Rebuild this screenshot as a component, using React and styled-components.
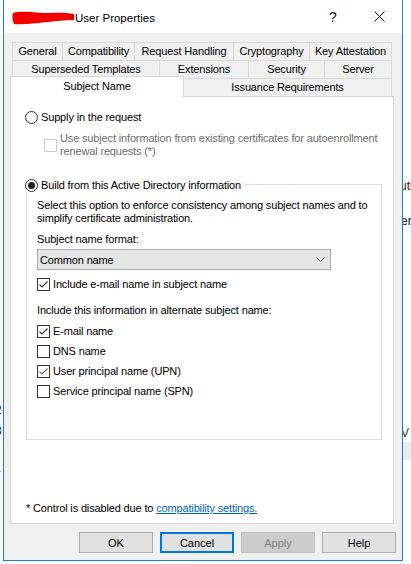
import React from 'react';
import styled, { createGlobalStyle } from 'styled-components';

const GlobalStyle = createGlobalStyle`
  html, body { margin: 0; padding: 0; background: #fff; }
  body { font-family: "Liberation Sans", Arial, sans-serif; overflow: hidden; }
  *, *::before, *::after { box-sizing: border-box; }
`;

const Desktop = styled.div`
  position: relative;
  width: 411px;
  height: 564px;
  overflow: hidden;
  background: #fff;
  padding-left: 3px;
`;

const Scrap = styled.span`
  position: absolute;
  left: ${p => p.$x}px;
  top: ${p => p.$y}px;
  font-family: "Liberation Sans", Arial, sans-serif;
  font-size: 12px;
  line-height: 14px;
  white-space: nowrap;
  color: ${p => p.$c || '#111'};
`;

const Band = styled.div`
  position: absolute;
  left: 400px;
  top: 442px;
  width: 11px;
  height: 18px;
  background: #ececec;
`;

const Window = styled.div`
  position: relative;
  z-index: 1;
  width: 400px;
  height: 561px;
  border: 1px solid #1a7fd6;
  border-top: none;
  display: flex;
  flex-direction: column;
  font-family: "Liberation Sans", Arial, sans-serif;
  font-size: 11px;
  letter-spacing: -0.15px;
  color: #000;
`;

const TitleBar = styled.div`
  flex: none;
  height: 33px;
  background: #fff;
  display: flex;
  align-items: center;
  padding-left: 8px;
`;

const Redaction = styled.svg`
  flex: none;
  width: 63px;
  height: 16px;
  margin-top: 2px;
`;

const TitleText = styled.span`
  flex: 1;
  margin-top: 2px;
  font-size: 11.5px;
  letter-spacing: 0;
  white-space: nowrap;
`;

const CaptionButton = styled.div`
  flex: none;
  width: 46px;
  height: 33px;
  display: flex;
  align-items: center;
  justify-content: center;
  font-size: 14px;
  letter-spacing: 0;
  color: #111;
`;

const Body = styled.div`
  flex: 1;
  background: #f0f0f0;
  display: flex;
  flex-direction: column;
  padding: 9px 8px 0 6px;
`;

const TabStrip = styled.div`
  position: relative;
  z-index: 2;
  display: flex;
  flex-direction: column;
  padding: 0 2px;
`;

const TabRow = styled.div`
  display: flex;
  height: 18px;
  ${p => p.$front && `
    height: 20px;
    margin-top: -2px;
    align-items: flex-end;
  `}
`;

const Tab = styled.div`
  flex: none;
  width: ${p => p.$w}px;
  height: 18px;
  margin-left: ${p => p.$ml || 0}px;
  border-top: 1px solid #d9d9d9;
  border-left: 1px solid #d9d9d9;
  background: #f0f0f0;
  text-align: center;
  line-height: 17px;
  white-space: nowrap;
  &:last-child { border-right: 1px solid #d9d9d9; }
`;

const ActiveTab = styled(Tab)`
  position: relative;
  z-index: 1;
  height: 21px;
  margin-bottom: -1px;
  background: #fff;
  border-right: 1px solid #d9d9d9;
  line-height: 18px;
`;

const Panel = styled.div`
  flex: none;
  height: 428px;
  background: #fff;
  border: 1px solid #d9d9d9;
  display: flex;
  flex-direction: column;
  padding: 13px 0 8px 14px;
`;

const OptionRow = styled.div`
  display: flex;
  align-items: center;
  gap: 3px;
  min-height: 14px;
  margin-top: ${p => p.$mt || 0}px;
  margin-left: ${p => p.$ml || 0}px;
  color: ${p => (p.$disabled ? '#6d6d6d' : '#000')};
  line-height: 13px;
  white-space: nowrap;
`;

const RadioCircle = styled.span`
  flex: none;
  width: 13px;
  height: 13px;
  border-radius: 50%;
  border: 1px solid #333;
  background: #fff;
  display: flex;
  align-items: center;
  justify-content: center;
  &::after {
    content: '';
    width: 7px;
    height: 7px;
    border-radius: 50%;
    background: #222;
    display: ${p => (p.$checked ? 'block' : 'none')};
  }
`;

const Box = styled.span`
  flex: none;
  width: 13px;
  height: 13px;
  border: 1px solid ${p => (p.$disabled ? '#cccccc' : '#333')};
  background: #fff;
  display: flex;
  align-items: center;
  justify-content: center;
`;

const GroupBox = styled.div`
  position: relative;
  flex: none;
  margin: 26px 0 0 1px;
  width: 356px;
  height: 256px;
  border: 1px solid #dcdcdc;
  display: flex;
  flex-direction: column;
  padding: 14px 0 0 10px;
`;

const GroupLegend = styled.div`
  position: absolute;
  left: -2px;
  top: -7px;
  background: #fff;
  padding-right: 3px;
`;

const Text = styled.div`
  line-height: 13px;
  white-space: nowrap;
  margin-top: ${p => p.$mt || 0}px;
`;

const Select = styled.div`
  flex: none;
  width: 294px;
  height: 21px;
  margin-top: 3px;
  background: #e5e5e5;
  border: 1px solid #acacac;
  display: flex;
  align-items: center;
  justify-content: space-between;
  padding: 0 5px 0 2px;
`;

const Footnote = styled.div`
  margin-top: auto;
  margin-left: 1px;
  line-height: 13px;
  white-space: nowrap;
`;

const Link = styled.span`
  color: #0066cc;
  text-decoration: underline;
`;

const ButtonRow = styled.div`
  display: flex;
  justify-content: flex-end;
  gap: 7px;
  margin-top: 8px;
  margin-right: -2px;
`;

const Button = styled.button`
  flex: none;
  width: 74px;
  height: 21px;
  padding: 0;
  margin: 0;
  font: inherit;
  letter-spacing: 0;
  display: flex;
  align-items: center;
  justify-content: center;
  background: ${p => (p.$disabled ? '#cccccc' : '#e1e1e1')};
  border: 1px solid ${p => (p.$focused ? '#0078d7' : p.$disabled ? '#bfbfbf' : '#adadad')};
  box-shadow: ${p => (p.$focused ? 'inset 0 0 0 1px #0078d7' : 'none')};
  color: ${p => (p.$disabled ? '#838383' : '#000')};
`;

const Check = ({ color = '#333' }) => (
  <svg width="11" height="11" viewBox="0 0 11 11">
    <path d="M1.5 5.5 L4 8 L9.5 2.5" fill="none" stroke={color} strokeWidth="1.1" />
  </svg>
);

const CheckOption = ({ checked, checkColor, children, mt }) => (
  <OptionRow $mt={mt}>
    <Box>{checked && <Check color={checkColor} />}</Box>
    <span>{children}</span>
  </OptionRow>
);

export default function App() {
  return (
    <>
      <GlobalStyle />
      <Desktop>
        <Scrap $x={400} $y={179} $c="#4a1020">utl</Scrap>
        <Scrap $x={401} $y={214}>er</Scrap>
        <Scrap $x={401} $y={426} $c="#333">V A</Scrap>
        <Band />
        <Scrap $x={-5} $y={403}>2</Scrap>
        <Scrap $x={-5} $y={424}>3</Scrap>
        <Scrap $x={-5} $y={461} $c="#c8a800">1</Scrap>
        <Window>
          <TitleBar>
            <Redaction viewBox="0 0 63 16">
              <path
                d="M1 3 C 8 1, 18 2, 30 3 C 42 3, 52 2, 62 4 L 62 10 C 52 10, 44 11, 36 12 C 24 13, 12 15, 2 14 C 0 10, 0 6, 1 3 Z"
                fill="#f20000"
              />
            </Redaction>
            <TitleText>User Properties</TitleText>
            <CaptionButton>?</CaptionButton>
            <CaptionButton>
              <svg width="11" height="11" viewBox="0 0 11 11">
                <path d="M0.5 0.5 L10.5 10.5 M10.5 0.5 L0.5 10.5" stroke="#111" strokeWidth="1" />
              </svg>
            </CaptionButton>
          </TitleBar>
          <Body>
            <TabStrip>
              <TabRow>
                <Tab $w={50}>General</Tab>
                <Tab $w={72}>Compatibility</Tab>
                <Tab $w={99}>Request Handling</Tab>
                <Tab $w={76}>Cryptography</Tab>
                <Tab $w={83}>Key Attestation</Tab>
              </TabRow>
              <TabRow>
                <Tab $w={147}>Superseded Templates</Tab>
                <Tab $w={89}>Extensions</Tab>
                <Tab $w={76}>Security</Tab>
                <Tab $w={68}>Server</Tab>
              </TabRow>
              <TabRow $front>
                <ActiveTab $w={174} $ml={-2}>Subject Name</ActiveTab>
                <Tab $w={209} $ml={-1}>Issuance Requirements</Tab>
              </TabRow>
            </TabStrip>
            <Panel>
              <OptionRow>
                <RadioCircle />
                <span>Supply in the request</span>
              </OptionRow>
              <OptionRow $mt={8} $ml={19} $disabled>
                <Box $disabled />
                <span>
                  Use subject information from existing certificates for autoenrollment
                  <br />
                  renewal requests (*)
                </span>
              </OptionRow>
              <GroupBox>
                <GroupLegend>
                  <OptionRow>
                    <RadioCircle $checked />
                    <span>Build from this Active Directory information</span>
                  </OptionRow>
                </GroupLegend>
                <Text>
                  Select this option to enforce consistency among subject names and to
                  <br />
                  simplify certificate administration.
                </Text>
                <Text $mt={8}>Subject name format:</Text>
                <Select>
                  <span>Common name</span>
                  <svg width="9" height="5" viewBox="0 0 9 5">
                    <path d="M0.5 0.5 L4.5 4.5 L8.5 0.5" fill="none" stroke="#555" strokeWidth="1" />
                  </svg>
                </Select>
                <CheckOption checked mt={7}>Include e-mail name in subject name</CheckOption>
                <Text $mt={13}>Include this information in alternate subject name:</Text>
                <CheckOption checked mt={7}>E-mail name</CheckOption>
                <CheckOption mt={6}>DNS name</CheckOption>
                <CheckOption checked checkColor="#6a6a6a" mt={6}>User principal name (UPN)</CheckOption>
                <CheckOption mt={6}>Service principal name (SPN)</CheckOption>
              </GroupBox>
              <Footnote>
                * Control is disabled due to <Link>compatibility settings.</Link>
              </Footnote>
            </Panel>
            <ButtonRow>
              <Button>OK</Button>
              <Button $focused>Cancel</Button>
              <Button $disabled>Apply</Button>
              <Button>Help</Button>
            </ButtonRow>
          </Body>
        </Window>
      </Desktop>
    </>
  );
}
